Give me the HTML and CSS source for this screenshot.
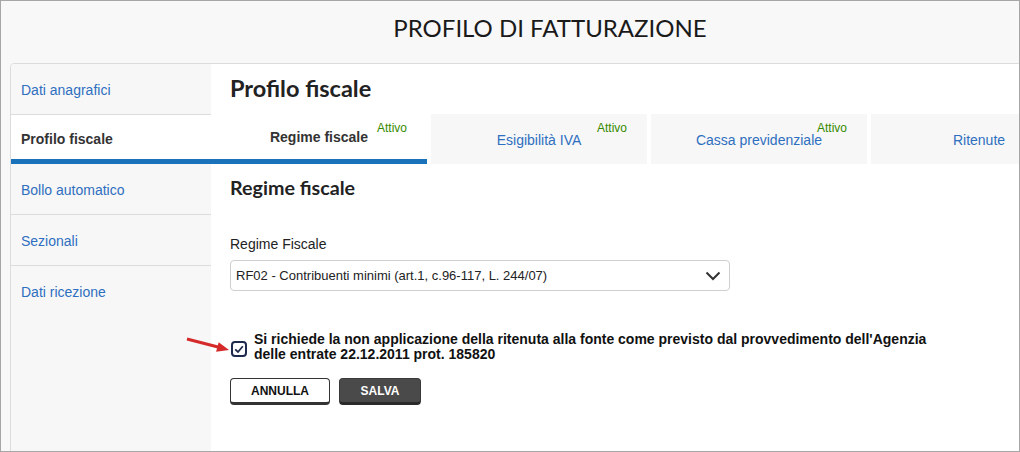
FILE: index.html
```html
<!DOCTYPE html>
<html lang="it">
<head>
<meta charset="utf-8">
<title>Profilo di fatturazione</title>
<link rel="stylesheet" href="styles.css">
</head>
<body>
<div class="frame">
  <div class="page">
    <header class="title">PROFILO DI FATTURAZIONE</header>
    <div class="card">
      <nav class="side">
        <a class="item">Dati anagrafici</a>
        <a class="item active">Profilo fiscale</a>
        <a class="item">Bollo automatico</a>
        <a class="item">Sezionali</a>
        <a class="item last">Dati ricezione</a>
      </nav>
      <main class="content">
        <h1 class="ptitle">Profilo fiscale</h1>
        <div class="tabs">
          <div class="tab active"><span class="tlabel">Regime fiscale</span><span class="badge">Attivo</span></div>
          <div class="tab"><span class="tlabel">Esigibilità IVA</span><span class="badge">Attivo</span></div>
          <div class="tab"><span class="tlabel">Cassa previdenziale</span><span class="badge">Attivo</span></div>
          <div class="tab"><span class="tlabel">Ritenute</span></div>
        </div>
        <section class="section">
          <h2 class="stitle">Regime fiscale</h2>
          <label class="flabel">Regime Fiscale</label>
          <div class="select">
            <span>RF02 - Contribuenti minimi (art.1, c.96-117, L. 244/07)</span>
            <svg class="chev" width="16" height="10" viewBox="0 0 16 10"><path d="M1.5 1.5 L8 8 L14.5 1.5" fill="none" stroke="#333" stroke-width="2"/></svg>
          </div>
          <div class="check-row">
            <svg class="arrow" width="48" height="24" viewBox="0 0 48 24"><line x1="3" y1="5" x2="34" y2="13" stroke="#d42a2a" stroke-width="3"/><polygon points="45,16 32.1,17.8 34.7,8.2" fill="#d42a2a"/></svg>
            <svg class="cbox" width="16" height="16" viewBox="0 0 16 16"><rect x="1" y="1" width="14" height="14" rx="3" fill="#fff" stroke="#1e2b4d" stroke-width="2"/><path d="M4.2 8.3 L7 11 L11.8 5.2" fill="none" stroke="#1e2b4d" stroke-width="1.8"/></svg>
            <p class="ctext">Si richiede la non applicazione della ritenuta alla fonte come previsto dal provvedimento dell'Agenzia delle entrate 22.12.2011 prot. 185820</p>
          </div>
          <div class="buttons">
            <button class="btn cancel">ANNULLA</button>
            <button class="btn save">SALVA</button>
          </div>
        </section>
      </main>
    </div>
  </div>
</div>
</body>
</html>
```
FILE: styles.css
```css
* { box-sizing: border-box; }
html, body { margin: 0; padding: 0; }
body { font-family: "Liberation Sans", Arial, sans-serif; background: #fff; }

.frame {
  width: 1020px;
  height: 452px;
  border: 1px solid #a6a6a6;
  background: #f8f8f8;
  overflow: hidden;
}
.page { width: 1098px; }

.title {
  height: 62px;
  padding-top: 12px;
  text-align: center;
  font-family: Lato, "Liberation Sans", sans-serif;
  font-size: 24px;
  line-height: 30px;
  color: #1a1a1a;
}

.card {
  margin-left: 9px;
  border: 1px solid #dcdcdc;
  border-radius: 4px 4px 0 0;
  display: flex;
  height: 420px;
  background: #fff;
  overflow: hidden;
}

.side {
  width: 200px;
  flex: none;
  background: #f7f7f7;
  display: flex;
  flex-direction: column;
}
.item {
  height: 51px;
  border-bottom: 1px solid #dcdcdc;
  padding-left: 10px;
  padding-top: 2px;
  display: flex;
  align-items: center;
  font-size: 14px;
  color: #2f6fc0;
}
.item.active {
  height: 49px;
  background: #fff;
  border-bottom: 5px solid #1a72bb;
  padding-top: 4px;
  font-weight: bold;
  color: #333;
}
.item.last { border-bottom: none; padding-top: 0; }

.content { flex: 1; background: #fff; }

.ptitle {
  margin: 0;
  height: 50px;
  padding-left: 19px;
  font-family: Lato, "Liberation Sans", sans-serif;
  font-weight: 700;
  font-size: 23.5px;
  line-height: 48px;
  color: #222;
}

.tabs { display: flex; gap: 4px; height: 50px; }
.tab {
  width: 216px;
  flex: none;
  height: 50px;
  background: #f7f7f7;
  position: relative;
  text-align: center;
  padding-top: 18px;
  font-size: 14px;
  line-height: 16px;
  color: #2f6fc0;
}
.tab.active {
  background: #fff;
  border-bottom: 5px solid #1a72bb;
  padding-top: 15px;
  font-weight: bold;
  color: #333;
}
.badge {
  position: absolute;
  top: 7px;
  right: 20px;
  font-size: 12px;
  line-height: 14px;
  font-weight: normal;
  color: #368a00;
}

.section { padding-left: 19px; }
.stitle {
  margin: 12px 0 0 0;
  font-family: Lato, "Liberation Sans", sans-serif;
  font-weight: 700;
  font-size: 19.7px;
  line-height: 24px;
  color: #222;
}
.flabel {
  display: block;
  margin-top: 36px;
  font-size: 14px;
  line-height: 16px;
  color: #222;
}
.select {
  margin-top: 8px;
  width: 500px;
  height: 31px;
  border: 1px solid #cfcfcf;
  border-radius: 4px;
  display: flex;
  align-items: center;
  justify-content: space-between;
  padding: 0 8px 0 5px;
  font-size: 13px;
  color: #222;
}
.chev { margin-top: 1px; }

.check-row {
  position: relative;
  margin-top: 41px;
  display: flex;
  align-items: flex-start;
  gap: 7px;
}
.arrow { position: absolute; left: -46px; top: 2px; }
.cbox { flex: none; margin-top: 9px; margin-left: 1px; }
.ctext {
  margin: 0;
  width: 685px;
  font-size: 14px;
  font-weight: bold;
  line-height: 15px;
  color: #111;
}

.buttons { margin-top: 16px; display: flex; gap: 9px; }
.btn {
  height: 27px;
  border-radius: 4px;
  font-family: "Liberation Sans", Arial, sans-serif;
  font-size: 12px;
  font-weight: bold;
  padding: 0;
  cursor: pointer;
}
.cancel {
  width: 100px;
  background: #fff;
  color: #111;
  border: 1px solid #333;
  border-bottom-width: 3px;
}
.save {
  width: 82px;
  background: #4a4a4a;
  color: #fff;
  border: 1px solid #3a3a3a;
  border-bottom: 3px solid #2a2a2a;
}
```
